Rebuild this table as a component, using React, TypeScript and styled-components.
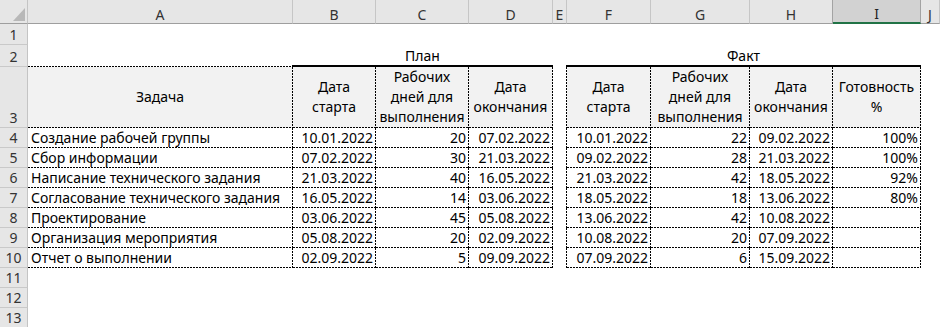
import React from "react";
import styled, { createGlobalStyle, css } from "styled-components";

const GlobalStyle = createGlobalStyle`
  html, body { margin: 0; padding: 0; background: #ffffff; }
  body { overflow: hidden; font-family: "Noto Sans", "Open Sans", sans-serif; }
`;

const dotRight = "repeating-linear-gradient(to bottom, #000 0 2px, transparent 2px 3px)";
const dotBottom = "repeating-linear-gradient(to right, #000 0 2px, transparent 2px 3px)";

const dottedRightBottom = css`
  background-image: ${dotRight}, ${dotBottom};
  background-size: 1px 100%, 100% 1px;
  background-position: right top, left bottom;
  background-repeat: no-repeat;
  padding-right: 1px;
  padding-bottom: 1px;
`;

const Sheet = styled.div`
  display: grid;
  grid-template-columns: 28px 265px 83px 93px 84px 14px 84px 99px 83px 88px 1fr;
  grid-template-rows: 24px 21px 22px 61px repeat(10, 20px);
  width: 940px;
  height: 327px;
  overflow: hidden;
  font-size: 14px;
  color: #000;
`;

const Corner = styled.div`
  box-sizing: border-box;
  display: flex;
  align-items: flex-end;
  justify-content: flex-end;
  padding: 0 2px 2px 0;
  background: #e6e6e6;
  border-right: 1px solid #c4c4c4;
  border-bottom: 1px solid #9e9e9e;
`;

const ColHead = styled.div<{ $selected?: boolean }>`
  box-sizing: border-box;
  display: flex;
  align-items: center;
  justify-content: center;
  padding-top: 6px;
  background: #e6e6e6;
  border-right: 1px solid #c6c6c6;
  border-bottom: 1px solid #9e9e9e;
  color: #333;
  font-size: 14px;
  line-height: 16px;
  ${(p) =>
    p.$selected &&
    css`
      background: #d2d2d2;
      border-right-color: #a3a3a3;
      border-bottom: 2px solid #217346;
      box-shadow: -1px 0 0 #a3a3a3;
      color: #222;
    `}
`;

const RowHead = styled.div`
  box-sizing: border-box;
  display: flex;
  align-items: flex-end;
  justify-content: center;
  background: #e6e6e6;
  border-right: 1px solid #c4c4c4;
  border-bottom: 1px solid #c9c9c9;
  color: #333;
  font-size: 14px;
  line-height: 19px;
`;

const Blank = styled.div<{ $dottedBottom?: boolean }>`
  box-sizing: border-box;
  background-color: #ffffff;
  ${(p) =>
    p.$dottedBottom &&
    css`
      background-image: ${dotBottom};
      background-size: 100% 1px;
      background-position: left bottom;
      background-repeat: no-repeat;
    `}
`;

const GroupTitle = styled.div<{ $span: number }>`
  box-sizing: border-box;
  grid-column: span ${(p) => p.$span};
  margin-left: -1px;
  display: flex;
  align-items: flex-end;
  justify-content: center;
  border-bottom: 2px solid #000;
  line-height: 19px;
`;

const HeadCell = styled.div`
  box-sizing: border-box;
  display: flex;
  align-items: center;
  justify-content: center;
  text-align: center;
  background-color: #f2f2f2;
  ${dottedRightBottom};
  line-height: 20px;
`;

const GapCell = styled.div`
  box-sizing: border-box;
  background-image: ${dotRight};
  background-size: 1px 100%;
  background-position: right top;
  background-repeat: no-repeat;
`;

const DataCell = styled.div<{ $align: "left" | "right" }>`
  box-sizing: border-box;
  display: flex;
  align-items: flex-end;
  justify-content: ${(p) => (p.$align === "right" ? "flex-end" : "flex-start")};
  ${dottedRightBottom};
  padding-left: ${(p) => (p.$align === "left" ? "3px" : "0")};
  padding-right: ${(p) => (p.$align === "right" ? "3px" : "1px")};
  line-height: 19px;
  white-space: nowrap;
`;

const CornerMark = () => (
  <svg width="12" height="13" viewBox="0 0 12 13">
    <polygon points="12,0 12,13 0,13" fill="#b8b8b8" />
  </svg>
);

const columns = ["A", "B", "C", "D", "E", "F", "G", "H", "I", "J"];

const planHeads = [["Дата", "старта"], ["Рабочих", "дней для", "выполнения"], ["Дата", "окончания"]];
const factHeads = [...planHeads, ["Готовность", "%"]];

type Task = {
  name: string;
  plan: [string, string, string];
  fact: [string, string, string, string];
};

const tasks: Task[] = [
  { name: "Создание рабочей группы", plan: ["10.01.2022", "20", "07.02.2022"], fact: ["10.01.2022", "22", "09.02.2022", "100%"] },
  { name: "Сбор информации", plan: ["07.02.2022", "30", "21.03.2022"], fact: ["09.02.2022", "28", "21.03.2022", "100%"] },
  { name: "Написание технического задания", plan: ["21.03.2022", "40", "16.05.2022"], fact: ["21.03.2022", "42", "18.05.2022", "92%"] },
  { name: "Согласование технического задания", plan: ["16.05.2022", "14", "03.06.2022"], fact: ["18.05.2022", "18", "13.06.2022", "80%"] },
  { name: "Проектирование", plan: ["03.06.2022", "45", "05.08.2022"], fact: ["13.06.2022", "42", "10.08.2022", ""] },
  { name: "Организация мероприятия", plan: ["05.08.2022", "20", "02.09.2022"], fact: ["10.08.2022", "20", "07.09.2022", ""] },
  { name: "Отчет о выполнении", plan: ["02.09.2022", "5", "09.09.2022"], fact: ["07.09.2022", "6", "15.09.2022", ""] },
];

const Lines = ({ lines }: { lines: string[] }) => (
  <span>
    {lines.map((l, i) => (
      <React.Fragment key={i}>
        {i > 0 && <br />}
        {l}
      </React.Fragment>
    ))}
  </span>
);

export default function App() {
  return (
    <>
      <GlobalStyle />
      <Sheet>
        <Corner>
          <CornerMark />
        </Corner>
        {columns.map((c) => (
          <ColHead key={c} $selected={c === "I"}>
            {c}
          </ColHead>
        ))}

        <RowHead>1</RowHead>
        {columns.map((c) => (
          <Blank key={`r1${c}`} />
        ))}

        <RowHead>2</RowHead>
        <Blank $dottedBottom />
        <GroupTitle $span={3}>План</GroupTitle>
        <Blank />
        <GroupTitle $span={4}>Факт</GroupTitle>
        <Blank />

        <RowHead>3</RowHead>
        <HeadCell>Задача</HeadCell>
        {planHeads.map((h, i) => (
          <HeadCell key={`p${i}`}>
            <Lines lines={h} />
          </HeadCell>
        ))}
        <GapCell />
        {factHeads.map((h, i) => (
          <HeadCell key={`f${i}`}>
            <Lines lines={h} />
          </HeadCell>
        ))}
        <Blank />

        {tasks.map((t, idx) => (
          <React.Fragment key={t.name}>
            <RowHead>{idx + 4}</RowHead>
            <DataCell $align="left">{t.name}</DataCell>
            {t.plan.map((v, i) => (
              <DataCell key={`p${i}`} $align="right">
                {v}
              </DataCell>
            ))}
            <GapCell />
            {t.fact.map((v, i) => (
              <DataCell key={`f${i}`} $align="right">
                {v}
              </DataCell>
            ))}
            <Blank />
          </React.Fragment>
        ))}

        {[11, 12, 13].map((r) => (
          <React.Fragment key={r}>
            <RowHead>{r}</RowHead>
            {columns.map((c) => (
              <Blank key={`r${r}${c}`} />
            ))}
          </React.Fragment>
        ))}
      </Sheet>
    </>
  );
}
